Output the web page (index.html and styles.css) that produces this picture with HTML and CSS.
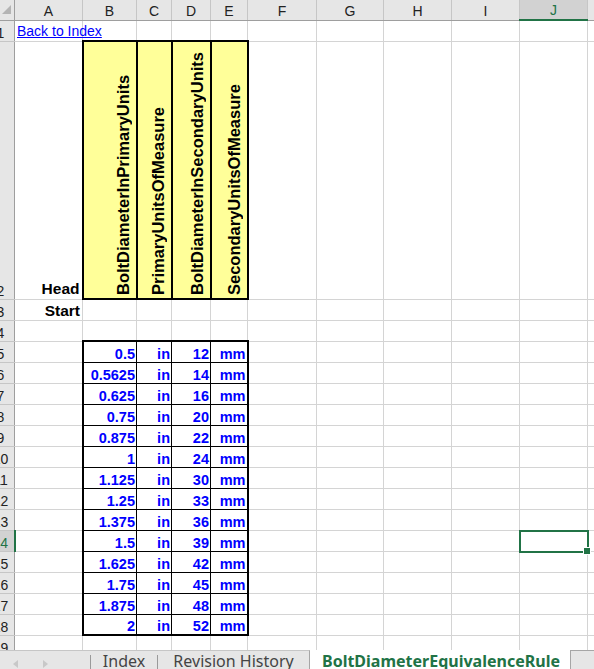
FILE: index.html
```html
<!DOCTYPE html>
<html lang="en">
<head>
    <meta charset="UTF-8">
    <meta name="viewport" content="width=device-width, initial-scale=1.0">
    <title>BoltDiameterEquivalenceRule</title>
    <link rel="stylesheet" href="styles.css">
</head>
<body>
<div class="book">
    <!-- sheet grid -->
    <div class="grid">
        <table class="sheet">
            <colgroup>
                <col class="w-rh"><col class="w-a"><col class="w-b"><col class="w-c"><col class="w-d"><col class="w-e">
                <col class="w-f"><col class="w-g"><col class="w-h"><col class="w-i"><col class="w-j"><col class="w-k">
            </colgroup>
            <tr class="hdr">
                <th class="corner"><span class="tri"></span></th>
                <th>A</th><th>B</th><th>C</th><th>D</th><th>E</th><th>F</th><th>G</th><th>H</th><th>I</th><th class="sel">J</th><th>K</th>
            </tr>
            <tr>
                <th class="rn">1</th>
                <td class="lnk"><a href="#" class="link">Back to Index</a></td>
                <td></td><td></td><td></td><td></td><td></td><td></td><td></td><td></td><td></td><td></td>
            </tr>
            <tr class="tall">
                <th class="rn">2</th>
                <td class="lbl lbl--head">Head</td>
                <td class="col-h"><div class="vt">BoltDiameterInPrimaryUnits</div></td>
                <td class="col-h"><div class="vt">PrimaryUnitsOfMeasure</div></td>
                <td class="col-h"><div class="vt">BoltDiameterInSecondaryUnits</div></td>
                <td class="col-h"><div class="vt">SecondaryUnitsOfMeasure</div></td>
                <td></td><td></td><td></td><td></td><td></td><td></td>
            </tr>
            <tr>
                <th class="rn">3</th>
                <td class="lbl lbl--start">Start</td>
                <td></td><td></td><td></td><td></td><td></td><td></td><td></td><td></td><td></td><td></td>
            </tr>
            <tr>
                <th class="rn">4</th>
                <td></td><td></td><td></td><td></td><td></td><td></td><td></td><td></td><td></td><td></td><td></td>
            </tr>
            <tr class="first">
                <th class="rn">5</th><td></td>
                <td class="v v--l">0.5</td><td class="v">in</td><td class="v">12</td><td class="v v--r">mm</td>
                <td></td><td></td><td></td><td></td><td></td><td></td>
            </tr>
            <tr>
                <th class="rn">6</th><td></td>
                <td class="v v--l">0.5625</td><td class="v">in</td><td class="v">14</td><td class="v v--r">mm</td>
                <td></td><td></td><td></td><td></td><td></td><td></td>
            </tr>
            <tr>
                <th class="rn">7</th><td></td>
                <td class="v v--l">0.625</td><td class="v">in</td><td class="v">16</td><td class="v v--r">mm</td>
                <td></td><td></td><td></td><td></td><td></td><td></td>
            </tr>
            <tr>
                <th class="rn">8</th><td></td>
                <td class="v v--l">0.75</td><td class="v">in</td><td class="v">20</td><td class="v v--r">mm</td>
                <td></td><td></td><td></td><td></td><td></td><td></td>
            </tr>
            <tr>
                <th class="rn">9</th><td></td>
                <td class="v v--l">0.875</td><td class="v">in</td><td class="v">22</td><td class="v v--r">mm</td>
                <td></td><td></td><td></td><td></td><td></td><td></td>
            </tr>
            <tr>
                <th class="rn">10</th><td></td>
                <td class="v v--l">1</td><td class="v">in</td><td class="v">24</td><td class="v v--r">mm</td>
                <td></td><td></td><td></td><td></td><td></td><td></td>
            </tr>
            <tr>
                <th class="rn">11</th><td></td>
                <td class="v v--l">1.125</td><td class="v">in</td><td class="v">30</td><td class="v v--r">mm</td>
                <td></td><td></td><td></td><td></td><td></td><td></td>
            </tr>
            <tr>
                <th class="rn">12</th><td></td>
                <td class="v v--l">1.25</td><td class="v">in</td><td class="v">33</td><td class="v v--r">mm</td>
                <td></td><td></td><td></td><td></td><td></td><td></td>
            </tr>
            <tr>
                <th class="rn">13</th><td></td>
                <td class="v v--l">1.375</td><td class="v">in</td><td class="v">36</td><td class="v v--r">mm</td>
                <td></td><td></td><td></td><td></td><td></td><td></td>
            </tr>
            <tr>
                <th class="rn sel">14</th><td></td>
                <td class="v v--l">1.5</td><td class="v">in</td><td class="v">39</td><td class="v v--r">mm</td>
                <td></td><td></td><td></td><td></td><td class="active"></td><td></td>
            </tr>
            <tr>
                <th class="rn">15</th><td></td>
                <td class="v v--l">1.625</td><td class="v">in</td><td class="v">42</td><td class="v v--r">mm</td>
                <td></td><td></td><td></td><td></td><td></td><td></td>
            </tr>
            <tr>
                <th class="rn">16</th><td></td>
                <td class="v v--l">1.75</td><td class="v">in</td><td class="v">45</td><td class="v v--r">mm</td>
                <td></td><td></td><td></td><td></td><td></td><td></td>
            </tr>
            <tr>
                <th class="rn">17</th><td></td>
                <td class="v v--l">1.875</td><td class="v">in</td><td class="v">48</td><td class="v v--r">mm</td>
                <td></td><td></td><td></td><td></td><td></td><td></td>
            </tr>
            <tr class="last">
                <th class="rn">18</th><td></td>
                <td class="v v--l">2</td><td class="v">in</td><td class="v">52</td><td class="v v--r">mm</td>
                <td></td><td></td><td></td><td></td><td></td><td></td>
            </tr>
            <tr>
                <th class="rn">19</th>
                <td></td><td></td><td></td><td></td><td></td><td></td><td></td><td></td><td></td><td></td><td></td>
            </tr>
        </table>
    </div>

    <!-- sheet tabs -->
    <div class="tabs">
        <span class="nav">
            <span class="arr arr--l"></span>
            <span class="arr arr--r"></span>
        </span>
        <span class="sep"></span>
        <span class="tab tab--index">Index</span>
        <span class="sep"></span>
        <span class="tab tab--rev">Revision History</span>
        <span class="tab tab--on">BoltDiameterEquivalenceRule</span>
        <span class="more"></span>
    </div>
</div>
</body>
</html>
```

FILE: styles.css
```css
* {box-sizing: border-box;}
html, body {margin: 0; height: 100%; overflow: hidden; background: #fff;}
body {font-family: "Liberation Sans", Arial, sans-serif; color: #000;}

.book {height: 100vh; display: flex; flex-direction: column;}
.grid {flex: 1; overflow: hidden;}

/* grid: row header is half scrolled out on the left */
.sheet {border-collapse: collapse; table-layout: fixed; width: 669px; margin-left: -14px;}
.w-rh {width: 28px;} .w-a {width: 68px;} .w-b {width: 54px;} .w-c {width: 35px;}
.w-d {width: 39px;} .w-e {width: 37px;} .w-f {width: 69px;} .w-g {width: 67px;}
.w-h {width: 68px;} .w-i {width: 68px;} .w-j {width: 68px;} .w-k {width: 68px;}

.sheet td, .sheet th {
    padding: 0 2px; height: 21px; border: 1px solid #d4d4d4;
    font-size: 14px; line-height: 15px; white-space: nowrap; vertical-align: bottom;
}
.sheet th {background: #e6e6e6; font-weight: normal; color: #222; text-align: center; border-color: #c6c6c6;}
.hdr th {height: 20px; border-top: none; border-bottom-color: #9e9e9e; padding-bottom: 1px;}
.sheet th.rn {border-right-color: #9e9e9e; padding: 0;}
.corner {text-align: right !important; border-right-color: #9e9e9e !important;}
.tri {display: inline-block; width: 0; height: 0; margin: 0 1px 2px 0; border-left: 9px solid transparent; border-bottom: 9px solid #b4b4b4;}
.sheet th.sel {background: #d2d2d2; color: #217346;}
.hdr th.sel {border-bottom: 2px solid #217346;}
.sheet th.rn.sel {border-right: 2px solid #217346;}

.tall td, .tall th {height: 258px;}

.lnk {padding: 0 3px 2px 2px !important;}
.link {color: #0000ff; text-decoration: underline;}

.lbl {font-weight: bold; font-size: 15.5px !important; text-align: right;}
.lbl--head {padding-bottom: 3px !important;}
.lbl--start {padding-bottom: 2px !important;}

/* rotated header block */
.sheet td.col-h {background: #ffff99; border: 2px solid #000; padding: 0;}
.vt {
    writing-mode: vertical-rl; transform: rotate(180deg);
    width: 20px; height: 248px; margin: 0 3px 0 auto; padding-top: 3px;
    font-size: 16.5px; line-height: 20px; font-weight: bold;
}

/* values block */
.sheet td.v {color: #0000ff; font-weight: bold; font-size: 14.5px; text-align: right; border: 1px solid #000; padding: 0 1px 0 2px;}
.sheet td.v--l {border-left: 2px solid #000;}
.sheet td.v--r {border-right: 2px solid #000;}
.sheet .first td.v {border-top: 2px solid #000;}
.sheet .last td.v {border-bottom: 2px solid #000;}

/* current cell */
.active {position: relative;}
.active::after {content: ""; position: absolute; top: -1px; left: -1px; right: -2px; bottom: -2px; border: 2px solid #217346;}
.active::before {content: ""; position: absolute; right: -4px; bottom: -4px; width: 6px; height: 6px; background: #217346; border: 1px solid #fff; z-index: 1;}

/* tab strip */
.tabs {
    height: 19px; flex: none; display: flex; align-items: stretch; overflow: hidden;
    font-family: "Noto Sans", "Open Sans", sans-serif; font-size: 16px; line-height: 20px; color: #444;
}
.nav, .tab--index, .tab--rev, .sep, .more {background: #e6e6e6; border-top: 1px solid #c6c6c6;}
.nav {width: 90px; display: flex; align-items: flex-end; gap: 25px; padding: 0 0 0 13px;}
.arr {width: 0; height: 0; border-top: 4px solid transparent; border-bottom: 4px solid transparent; margin-bottom: 1px;}
.arr--l {border-right: 5px solid #c8c8c8;}
.arr--r {border-left: 5px solid #c8c8c8;}
.sep {width: 1px; background-image: linear-gradient(#9a9a9a, #9a9a9a); background-size: 1px 14px; background-position: bottom; background-repeat: no-repeat;}
.tab {text-align: center; white-space: nowrap;}
.tab--index {width: 66px;}
.tab--rev {width: 152px; border-right: 1px solid #a6a6a6;}
.tab--on {width: 260px; background: #fff; color: #217346; font-weight: bold; padding-top: 1px; text-align: left; padding-left: 12px;}
.more {flex: 1; border-left: 1px solid #a6a6a6; border-top-color: #a6a6a6;}
```
